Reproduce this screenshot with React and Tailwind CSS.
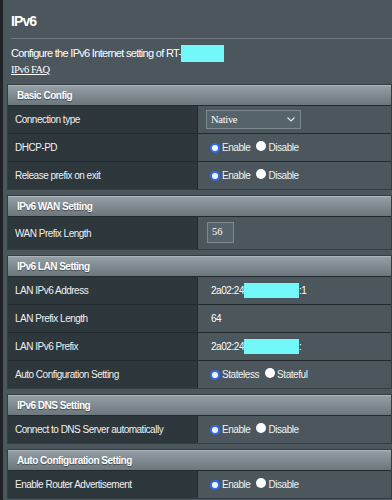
import React from "react";

const font = { fontFamily: '"Liberation Sans", Arial, sans-serif' };
const serif = { fontFamily: '"Liberation Serif", "Times New Roman", serif' };

function Radio({ checked }) {
  return checked ? (
    <span className="inline-block w-[10px] h-[10px] rounded-full border-2 border-[#2f6df2] bg-[#f4f7ff] shrink-0" />
  ) : (
    <span className="inline-block w-[10px] h-[10px] rounded-full bg-white shrink-0" />
  );
}

function RadioPair({ a = "Enable", b = "Disable" }) {
  return (
    <div className="flex items-center text-[10px] tracking-[-0.45px] text-[#f0f2f3] pl-[4px]">
      <Radio checked />
      <span className="ml-[2px]">{a}</span>
      <span className="ml-[6px]"><Radio /></span>
      <span className="ml-[2px]">{b}</span>
    </div>
  );
}

function Header({ children }) {
  return (
    <div className="h-[20px] flex items-center pl-[9px] bg-gradient-to-b from-[#949fa5] to-[#6b777d] border-t border-[#aab4b9] text-[10px] tracking-[-0.5px] font-bold text-white [text-shadow:0_1px_1px_rgba(0,0,0,0.45)]">
      {children}
    </div>
  );
}

function Row({ label, children, h = "h-[28px]" }) {
  return (
    <div className={`flex ${h} border-t border-[#222a2e]`}>
      <div className="w-[190px] shrink-0 bg-[#2e373c] flex items-center pl-[7px] text-[10px] tracking-[-0.5px] text-[#eef0f1] border-r border-[#222a2e]">
        {label}
      </div>
      <div className="flex-1 bg-[#4b575d] flex items-center pl-[8px]">{children}</div>
    </div>
  );
}

function Section({ title, children }) {
  return (
    <div className="mb-[5px] border border-[#333d42]">
      <Header>{title}</Header>
      {children}
    </div>
  );
}

function Cyan({ w, h = "h-[15px]" }) {
  return <span className={`inline-block ${w} ${h} bg-[#73f8fa]`} />;
}

export default function App() {
  return (
    <div className="w-[392px] h-[500px] overflow-hidden flex bg-[#4c565d]" style={font}>
      <div className="w-[3px] shrink-0 bg-[#1d2327]" />
      <div className="flex-1 min-w-0">
        <div className="pl-[8px] pt-[13px]">
          <div className="text-[14px] font-bold tracking-[-0.9px] text-white leading-[17px]">IPv6</div>
          <div className="mt-[8px] h-px bg-[#6f797e]" />
          <div className="mt-[5px] flex items-center text-[11px] tracking-[-0.7px] text-white leading-[18px]">
            <span>Configure the IPv6 Internet setting of RT-</span>
            <Cyan w="w-[43px]" h="h-[17px]" />
          </div>
          <div className="mt-[1px] text-[10.5px] leading-[14px] tracking-[-0.5px] text-white underline" style={serif}>
            IPv6 FAQ
          </div>
        </div>
        <div className="ml-[4px] mt-[7px]">
          <Section title="Basic Config">
            <Row label="Connection type">
              <div className="w-[95px] h-[19px] border border-[#7c8a90] bg-[#56636a] flex items-center justify-between pl-[4px] pr-[5px] text-[10.5px] tracking-[-0.3px] text-white" style={serif}>
                <span>Native</span>
                <svg width="8" height="5" viewBox="0 0 8 5" fill="none" stroke="#e6e9ea" strokeWidth="1.1"><path d="M0.5 0.5 L4 4 L7.5 0.5" /></svg>
              </div>
            </Row>
            <Row label="DHCP-PD"><RadioPair /></Row>
            <Row label="Release prefix on exit"><RadioPair /></Row>
          </Section>
          <Section title="IPv6 WAN Setting">
            <Row label="WAN Prefix Length" h="h-[33px]">
              <div className="ml-[1px] mb-[2px] w-[27px] h-[21px] border border-[#7c8a90] bg-[#56636a] flex items-center pl-[4px] text-[10.5px] text-white" style={serif}>
                56
              </div>
            </Row>
          </Section>
          <Section title="IPv6 LAN Setting">
            <Row label="LAN IPv6 Address">
              <div className="flex items-center text-[10px] tracking-[-0.45px] text-white pl-[5px]">
                <span>2a02:24</span>
                <Cyan w="w-[55px]" />
                <span>:1</span>
              </div>
            </Row>
            <Row label="LAN Prefix Length">
              <span className="text-[10px] tracking-[-0.45px] text-white pl-[5px]">64</span>
            </Row>
            <Row label="LAN IPv6 Prefix">
              <div className="flex items-center text-[10px] tracking-[-0.45px] text-white pl-[5px]">
                <span>2a02:24</span>
                <Cyan w="w-[55px]" />
                <span>:</span>
              </div>
            </Row>
            <Row label="Auto Configuration Setting"><RadioPair a="Stateless" b="Stateful" /></Row>
          </Section>
          <Section title="IPv6 DNS Setting">
            <Row label="Connect to DNS Server automatically"><RadioPair /></Row>
          </Section>
          <Section title="Auto Configuration Setting">
            <Row label="Enable Router Advertisement"><RadioPair /></Row>
          </Section>
        </div>
      </div>
    </div>
  );
}
